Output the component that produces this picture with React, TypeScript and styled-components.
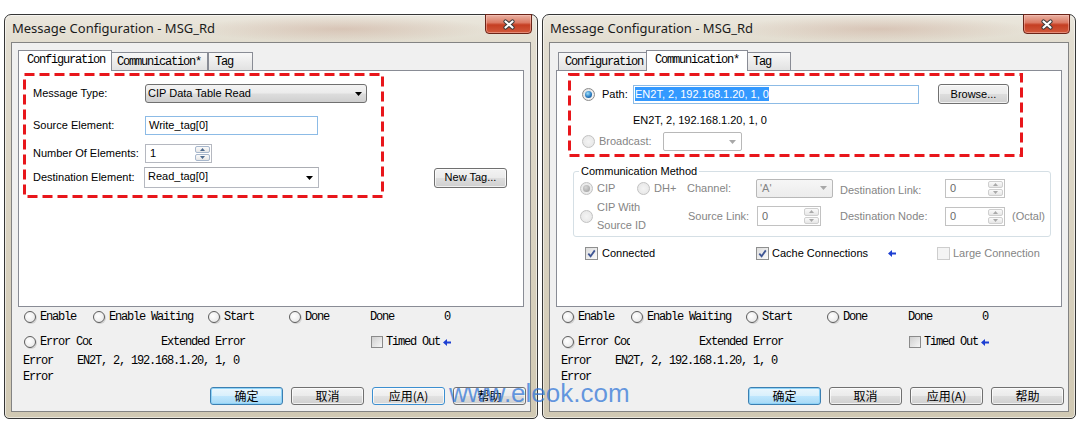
import React from "react";
import styled, { createGlobalStyle, css } from "styled-components";

const SANS = `"Liberation Sans", Arial, sans-serif`;
const MONO = `"Liberation Mono", "Courier New", monospace`;
const CJK = `"Noto Sans CJK SC", "Liberation Sans", sans-serif`;
const TITLE = `"Noto Sans", "Open Sans", sans-serif`;
const GRAY_TEXT = "#858585";

const GlobalStyle = createGlobalStyle`
  html, body { margin: 0; padding: 0; background: #fff; }
  * { box-sizing: border-box; }
`;

const Page = styled.div`
  position: relative;
  display: flex;
  align-items: flex-start;
  gap: 4px;
  padding: 14px 0 0 4px;
  width: 1081px;
  height: 429px;
  overflow: hidden;
  background: #fff;
`;

const Window = styled.div`
  width: 534px;
  display: flex;
  flex-direction: column;
  padding: 0 6px 6px;
  border: 1px solid #363636;
  border-radius: 7px 7px 5px 5px;
  background: linear-gradient(180deg, #ebe7dd 0px, #e2ddd0 27px, #d9d2c0 55%, #d1c9b3 100%);
  box-shadow: inset 0 0 0 1px rgba(255, 255, 255, 0.55);
`;

const TitleBar = styled.div`
  height: 27px;
  display: flex;
  align-items: center;
  justify-content: space-between;
  padding-left: 1px;
  background: radial-gradient(ellipse 150px 13px at 330px 14px, rgba(185, 135, 115, 0.32), rgba(185, 135, 115, 0) 100%);
`;

const Title = styled.span`
  font: 13px/1 ${TITLE};
  color: #1b1b1b;
  white-space: nowrap;
`;

const CloseButton = styled.div`
  align-self: flex-start;
  width: 47px;
  height: 20px;
  margin: -1px -1px 0 0;
  border: 1px solid #6b2418;
  border-radius: 0 0 4px 4px;
  background: linear-gradient(180deg, #e9b2a3 0%, #dc7a64 42%, #c53e22 55%, #d2593c 100%);
  box-shadow: inset 0 0 0 1px rgba(255, 205, 195, 0.45);
  display: flex;
  align-items: center;
  justify-content: center;
`;

const Client = styled.div`
  border: 1px solid #838383;
  background: #f0f0f0;
  padding: 7px 6px 6px;
  display: flex;
  flex-direction: column;
`;

const TabRow = styled.div`
  display: flex;
  align-items: flex-end;
  height: 20px;
  padding-left: 2px;
`;

const Tab = styled.div<{ $active?: boolean; $w: number }>`
  flex-shrink: 0;
  width: ${(p) => p.$w}px;
  height: 18px;
  padding-left: 6px;
  font: 12px/18px ${MONO};
  letter-spacing: -1.2px;
  color: #000;
  white-space: nowrap;
  border: 1px solid #898c95;
  border-bottom: none;
  background: linear-gradient(180deg, #f8f8f8, #e2e2e2);
  ${(p) =>
    p.$active &&
    css`
      position: relative;
      z-index: 1;
      width: ${p.$w + 4}px;
      height: 21px;
      margin: 0 -2px -1px;
      padding-left: 8px;
      line-height: 19px;
      background: #fff;
    `}
`;

const Panel = styled.div`
  position: relative;
  height: 237px;
  border: 1px solid #898c95;
  background: #fff;
`;

const AnnotationSvg = styled.svg<{ $l: number; $t: number }>`
  position: absolute;
  left: ${(p) => p.$l}px;
  top: ${(p) => p.$t}px;
  pointer-events: none;
`;

function Annotation({ l, t, w, h }: { l: number; t: number; w: number; h: number }) {
  return (
    <AnnotationSvg $l={l} $t={t} width={w} height={h} viewBox={`0 0 ${w} ${h}`}>
      <rect x="1.5" y="1.5" width={w - 3} height={h - 3} fill="none" stroke="#e8161b" strokeWidth="3" strokeDasharray="10 5" />
    </AnnotationSvg>
  );
}

/* ---------- generic Win7 controls ---------- */

const Label = styled.span<{ $w?: number; $disabled?: boolean; $pt?: number; $ml?: number }>`
  flex-shrink: 0;
  ${(p) => (p.$w ? `width: ${p.$w}px;` : "")}
  ${(p) => (p.$pt ? `padding-top: ${p.$pt}px;` : "")}
  margin-left: ${(p) => p.$ml ?? 0}px;
  font: 11px/13px ${SANS};
  color: ${(p) => (p.$disabled ? GRAY_TEXT : "#000")};
  white-space: nowrap;
`;

const PushButton = styled.div<{ $w: number; $h: number; $ml?: number; $hot?: boolean; $default?: boolean; $cjk?: boolean }>`
  flex-shrink: 0;
  width: ${(p) => p.$w}px;
  height: ${(p) => p.$h}px;
  margin-left: ${(p) => p.$ml ?? 0}px;
  border: 1px solid #707070;
  border-radius: 3px;
  background: linear-gradient(180deg, #f3f3f3 0%, #ebebeb 48%, #dddddd 52%, #cfcfcf 100%);
  box-shadow: inset 0 0 0 1px rgba(255, 255, 255, 0.7);
  display: flex;
  align-items: center;
  justify-content: center;
  font: ${(p) => (p.$cjk ? `12px/1 ${CJK}` : `11px/1 ${SANS}`)};
  color: #000;
  white-space: nowrap;
  ${(p) =>
    p.$hot &&
    css`
      border-color: #3c8fd0;
      background: linear-gradient(180deg, #f6f6f6 0%, #eeeeee 48%, #e2e2e2 52%, #d6d6d6 100%);
    `}
  ${(p) =>
    p.$default &&
    css`
      border-color: #3c7fb1;
      background: linear-gradient(180deg, #eaf6fd 0%, #d9f0fc 48%, #bee6fd 52%, #a7d9f5 100%);
      box-shadow: inset 0 0 0 1px #8fd3f7;
    `}
`;

const DropList = styled.div<{ $w: number }>`
  width: ${(p) => p.$w}px;
  height: 19px;
  border: 1px solid #707070;
  border-radius: 3px;
  background: linear-gradient(180deg, #f3f3f3 0%, #ebebeb 48%, #dddddd 52%, #cfcfcf 100%);
  display: flex;
  align-items: center;
  justify-content: space-between;
  padding: 0 4px 0 2px;
  font: 11px/1 ${SANS};
  color: #000;
`;

const TextBox = styled.div<{ $w: number; $h?: number; $hot?: boolean; $pl?: number; $ml?: number }>`
  flex-shrink: 0;
  width: ${(p) => p.$w}px;
  height: ${(p) => p.$h ?? 19}px;
  margin-left: ${(p) => p.$ml ?? 0}px;
  border: 1px solid ${(p) => (p.$hot ? "#8cbbe6" : "#b5b8c0")};
  ${(p) => (p.$hot ? "" : "border-top-color: #abadb3; border-bottom-color: #dfe3ea;")}
  background: #fff;
  display: flex;
  align-items: center;
  padding-left: ${(p) => p.$pl ?? 3}px;
  font: 11px/1 ${SANS};
  color: #000;
  white-space: nowrap;
`;

const Selection = styled.span`
  background: #3399ff;
  color: #fff;
  line-height: 14px;
`;

const EditCombo = styled.div<{ $w: number; $ml?: number }>`
  flex-shrink: 0;
  width: ${(p) => p.$w}px;
  height: 21px;
  margin-left: ${(p) => p.$ml ?? 0}px;
  border: 1px solid #b5b8c0;
  border-top-color: #abadb3;
  background: #fff;
  display: flex;
  align-items: flex-start;
  justify-content: space-between;
  padding: 2px 5px 0 3px;
  font: 11px/13px ${SANS};
  color: #000;
  & > svg {
    margin-top: 6px;
  }
`;

const DisabledCombo = styled.div<{ $w: number; $fill?: boolean }>`
  flex-shrink: 0;
  width: ${(p) => p.$w}px;
  height: 19px;
  border: 1px solid #b8b8b8;
  border-radius: 2px;
  background: ${(p) => (p.$fill ? "linear-gradient(180deg, #f6f6f6, #ececec)" : "#fff")};
  display: flex;
  align-items: center;
  justify-content: space-between;
  padding: 0 5px 0 3px;
  font: 11px/1 ${SANS};
  color: ${GRAY_TEXT};
`;

const SpinBox = styled.div<{ $w: number; $h?: number; $disabled?: boolean; $ml?: number }>`
  flex-shrink: 0;
  width: ${(p) => p.$w}px;
  height: ${(p) => p.$h ?? 19}px;
  margin-left: ${(p) => p.$ml ?? 0}px;
  border: 1px solid ${(p) => (p.$disabled ? "#c2c2c2" : "#b5b8c0")};
  background: #fff;
  display: flex;
  align-items: center;
  padding-left: 4px;
  font: 11px/1 ${SANS};
  color: ${(p) => (p.$disabled ? "#6a6a6a" : "#000")};
`;

const SpinButtons = styled.div`
  margin-left: auto;
  width: 17px;
  height: 100%;
  display: flex;
  flex-direction: column;
  gap: 1px;
  padding: 1px;
`;

const SpinBtn = styled.span<{ $disabled?: boolean }>`
  flex: 1;
  border: 1px solid ${(p) => (p.$disabled ? "#cfcfcf" : "#a7b7cc")};
  border-radius: 2px;
  background: linear-gradient(180deg, #fafafa, #e6e6e6);
  display: flex;
  align-items: center;
  justify-content: center;
`;

const Radio = styled.span<{ $checked?: boolean; $disabled?: boolean }>`
  flex-shrink: 0;
  width: 13px;
  height: 13px;
  border-radius: 50%;
  border: 1px solid ${(p) => (p.$disabled ? "#c2c2c2" : "#8b8b8b")};
  background: ${(p) =>
    p.$disabled ? "radial-gradient(circle, #f4f4f4, #e4e4e4)" : "radial-gradient(circle at 60% 60%, #fdfdfd, #dcdcdc)"};
  display: inline-flex;
  align-items: center;
  justify-content: center;
  &::after {
    content: "";
    display: ${(p) => (p.$checked ? "block" : "none")};
    width: 7px;
    height: 7px;
    border-radius: 50%;
    background: ${(p) =>
      p.$disabled
        ? "radial-gradient(circle at 40% 35%, #d6d6d6, #9a9a9a)"
        : "radial-gradient(circle at 40% 35%, #9fe0fa 0%, #2a7cc2 55%, #0d3f73 100%)"};
  }
`;

const CheckBox = styled.span<{ $disabled?: boolean }>`
  flex-shrink: 0;
  width: 13px;
  height: 13px;
  border: 1px solid ${(p) => (p.$disabled ? "#cdcdcd" : "#8e8f8f")};
  background: ${(p) => (p.$disabled ? "#f4f4f4" : "linear-gradient(135deg, #dcdcdc, #fbfbfb)")};
  display: inline-flex;
  align-items: center;
  justify-content: center;
`;

/* ---------- icons ---------- */

const CloseIcon = () => (
  <svg width="14" height="11" viewBox="0 0 14 11">
    <path d="M3.5 2.5L10.5 8.5M10.5 2.5L3.5 8.5" stroke="#3a3a3a" strokeWidth="4.2" strokeLinecap="round" />
    <path d="M3.5 2.5L10.5 8.5M10.5 2.5L3.5 8.5" stroke="#ffffff" strokeWidth="2.2" strokeLinecap="round" />
  </svg>
);

const DropArrow = ({ color = "#000" }: { color?: string }) => (
  <svg width="7" height="4" viewBox="0 0 7 4">
    <path d="M0 0H7L3.5 4Z" fill={color} />
  </svg>
);

const SpinArrow = ({ up, color }: { up?: boolean; color: string }) => (
  <svg width="5" height="3" viewBox="0 0 5 3">
    <path d={up ? "M0 3H5L2.5 0Z" : "M0 0H5L2.5 3Z"} fill={color} />
  </svg>
);

const BlueArrow = () => (
  <svg width="8" height="7" viewBox="0 0 8 7">
    <path d="M0 3.5L4 0V2.4H8V4.6H4V7Z" fill="#1d3fd2" />
  </svg>
);

const CheckMark = () => (
  <svg width="9" height="9" viewBox="0 0 9 9">
    <path d="M1.3 4.6L3.6 7.2L7.8 1.4" fill="none" stroke="#3f5694" strokeWidth="1.8" />
  </svg>
);

function Spinner({ w, h, value, disabled, ml }: { w: number; h?: number; value: string; disabled?: boolean; ml?: number }) {
  const c = disabled ? "#a9a9a9" : "#4d6a8e";
  return (
    <SpinBox $w={w} $h={h} $disabled={disabled} $ml={ml}>
      {value}
      <SpinButtons>
        <SpinBtn $disabled={disabled}>
          <SpinArrow up color={c} />
        </SpinBtn>
        <SpinBtn $disabled={disabled}>
          <SpinArrow color={c} />
        </SpinBtn>
      </SpinButtons>
    </SpinBox>
  );
}

/* ---------- configuration tab ---------- */

const FormArea = styled.div`
  display: flex;
  flex-direction: column;
  padding-left: 14px;
`;

const FormRow = styled.div<{ $mt: number; $h: number }>`
  display: flex;
  align-items: center;
  margin-top: ${(p) => p.$mt}px;
  height: ${(p) => p.$h}px;
`;

function ConfigContent() {
  return (
    <>
      <FormArea>
        <FormRow $mt={13} $h={19}>
          <Label $w={112}>Message Type:</Label>
          <DropList $w={222}>
            <span>CIP Data Table Read</span>
            <DropArrow />
          </DropList>
        </FormRow>
        <FormRow $mt={13} $h={19}>
          <Label $w={112}>Source Element:</Label>
          <TextBox $w={173} $hot>
            Write_tag[0]
          </TextBox>
        </FormRow>
        <FormRow $mt={9} $h={19}>
          <Label $w={112}>Number Of Elements:</Label>
          <Spinner w={67} value="1" />
        </FormRow>
        <FormRow $mt={4} $h={21}>
          <Label $w={112}>Destination Element:</Label>
          <EditCombo $w={175} $ml={-1}>
            <span>Read_tag[0]</span>
            <DropArrow />
          </EditCombo>
          <PushButton $w={73} $h={20} $ml={115}>
            New Tag...
          </PushButton>
        </FormRow>
      </FormArea>
      <Annotation l={4} t={2} w={361} h={125} />
    </>
  );
}

/* ---------- communication tab ---------- */

const PathSection = styled.div`
  display: flex;
  flex-direction: column;
  padding-left: 25px;
`;

const LineRow = styled.div<{ $mt: number; $h: number; $pl?: number }>`
  display: flex;
  align-items: center;
  margin-top: ${(p) => p.$mt}px;
  height: ${(p) => p.$h}px;
  padding-left: ${(p) => p.$pl ?? 0}px;
`;

const Group = styled.fieldset`
  margin: 14px 0 0 16px;
  width: 478px;
  min-width: 0;
  padding: 0 0 10px 6px;
  border: 1px solid #d5dfe5;
  border-radius: 3px;
`;

const GroupLegend = styled.legend`
  margin-left: -1px;
  padding: 0 2px;
  font: 11px/13px ${SANS};
  color: #000;
`;

const GroupGrid = styled.div`
  display: grid;
  grid-template-columns: 107px 69px 84px 105px 67px auto;
  grid-template-rows: 20px 20px;
  row-gap: 8px;
  align-items: center;
`;

const Option = styled.div<{ $w?: number; $gap?: number }>`
  display: flex;
  align-items: center;
  flex-shrink: 0;
  ${(p) => (p.$w ? `width: ${p.$w}px;` : "")}
  gap: ${(p) => p.$gap ?? 4}px;
`;

const TwoLine = styled.span`
  font: 11px/18px ${SANS};
  color: ${GRAY_TEXT};
  white-space: nowrap;
`;

const ConnRow = styled.div`
  display: flex;
  align-items: center;
  margin-top: 10px;
  height: 13px;
  padding-left: 28px;
`;

function CommContent() {
  return (
    <>
      <PathSection>
        <LineRow $mt={13} $h={20}>
          <Radio $checked />
          <Label $w={31} $ml={7}>
            Path:
          </Label>
          <TextBox $w={286} $hot $pl={1}>
            <Selection>EN2T, 2, 192.168.1.20, 1, 0</Selection>
          </TextBox>
          <PushButton $w={71} $h={20} $ml={19}>
            Browse...
          </PushButton>
        </LineRow>
        <LineRow $mt={8} $h={16} $pl={51}>
          <Label>EN2T, 2, 192.168.1.20, 1, 0</Label>
        </LineRow>
        <LineRow $mt={4} $h={19}>
          <Radio $disabled />
          <Label $w={64} $disabled $ml={4}>
            Broadcast:
          </Label>
          <DisabledCombo $w={79}>
            <span />
            <DropArrow color="#a8a8a8" />
          </DisabledCombo>
        </LineRow>
      </PathSection>
      <Group>
        <GroupLegend>Communication Method</GroupLegend>
        <GroupGrid>
          <Option>
            <Option $w={53}>
              <Radio $checked $disabled />
              <Label $disabled>CIP</Label>
            </Option>
            <Option>
              <Radio $disabled />
              <Label $disabled>DH+</Label>
            </Option>
          </Option>
          <Label $disabled>Channel:</Label>
          <DisabledCombo $w={77} $fill>
            <span>'A'</span>
            <DropArrow color="#a8a8a8" />
          </DisabledCombo>
          <Label $disabled $pt={4}>
            Destination Link:
          </Label>
          <Spinner w={60} value="0" disabled />
          <span />

          <Option>
            <Radio $disabled />
            <TwoLine>
              CIP With
              <br />
              Source ID
            </TwoLine>
          </Option>
          <Label $disabled $ml={1}>
            Source Link:
          </Label>
          <Spinner w={64} h={20} value="0" disabled ml={1} />
          <Label $disabled>Destination Node:</Label>
          <Spinner w={60} value="0" disabled />
          <Label $disabled>(Octal)</Label>
        </GroupGrid>
      </Group>
      <ConnRow>
        <Option $w={171}>
          <CheckBox>
            <CheckMark />
          </CheckBox>
          <Label>Connected</Label>
        </Option>
        <Option $w={132} $gap={3}>
          <CheckBox>
            <CheckMark />
          </CheckBox>
          <Label>Cache Connections</Label>
        </Option>
        <Option $w={49}>
          <BlueArrow />
        </Option>
        <Option $gap={3}>
          <CheckBox $disabled />
          <Label $disabled>Large Connection</Label>
        </Option>
      </ConnRow>
      <Annotation l={11} t={2} w={455} h={84} />
    </>
  );
}

/* ---------- status section ---------- */

const StatusRow = styled.div<{ $mt: number; $pl: number }>`
  display: flex;
  align-items: center;
  height: 16px;
  margin-top: ${(p) => p.$mt}px;
  padding-left: ${(p) => p.$pl}px;
  font: 12px/16px ${MONO};
  letter-spacing: -1.2px;
  color: #000;
  white-space: nowrap;
`;

const Cell = styled.div<{ $w?: number; $gap?: number }>`
  display: flex;
  align-items: center;
  flex-shrink: 0;
  ${(p) => (p.$w ? `width: ${p.$w}px;` : "")}
  gap: ${(p) => p.$gap ?? 4}px;
`;

const OldRadio = styled.span`
  flex-shrink: 0;
  width: 12px;
  height: 12px;
  border-radius: 50%;
  border: 1px solid #5c5c5c;
  background: radial-gradient(circle at 40% 40%, #ffffff, #e2e2e2);
  box-shadow: 1px 1px 0 rgba(0, 0, 0, 0.12);
`;

const OldCheck = styled.span`
  flex-shrink: 0;
  width: 12px;
  height: 12px;
  border: 1px solid #8a8a8a;
  background: linear-gradient(135deg, #cfcfcf, #f6f6f6);
`;

const Clip = styled.span<{ $w: number }>`
  display: inline-block;
  width: ${(p) => p.$w}px;
  overflow: hidden;
`;

const ButtonRow = styled.div`
  display: flex;
  justify-content: flex-end;
  gap: 8px;
  margin: 2px -2px 0 0;
`;

function StatusSection({ applyHot }: { applyHot?: boolean }) {
  return (
    <>
      <StatusRow $mt={2} $pl={6}>
        <Cell $w={69}>
          <OldRadio />
          <span>Enable</span>
        </Cell>
        <Cell $w={115}>
          <OldRadio />
          <span>Enable Waiting</span>
        </Cell>
        <Cell $w={81}>
          <OldRadio />
          <span>Start</span>
        </Cell>
        <Cell $w={81}>
          <OldRadio />
          <span>Done</span>
        </Cell>
        <Cell $w={74}>Done</Cell>
        <Cell>0</Cell>
      </StatusRow>
      <StatusRow $mt={9} $pl={6}>
        <Cell $w={137}>
          <OldRadio />
          <Clip $w={52}>Error Code</Clip>
        </Cell>
        <Cell $w={210}>Extended Error</Cell>
        <Cell $gap={3}>
          <OldCheck />
          <span>Timed Out</span>
          <BlueArrow />
        </Cell>
      </StatusRow>
      <StatusRow $mt={3} $pl={5}>
        <Cell $w={54}>Error</Cell>
        <Cell>EN2T, 2, 192.168.1.20, 1, 0</Cell>
      </StatusRow>
      <StatusRow $mt={0} $pl={5}>
        <Cell>Error</Cell>
      </StatusRow>
      <ButtonRow>
        <PushButton $w={73} $h={18} $cjk $default>
          确定
        </PushButton>
        <PushButton $w={73} $h={18} $cjk>
          取消
        </PushButton>
        <PushButton $w={73} $h={18} $cjk $hot={applyHot}>
          应用(A)
        </PushButton>
        <PushButton $w={73} $h={18} $cjk>
          帮助
        </PushButton>
      </ButtonRow>
    </>
  );
}

/* ---------- dialog ---------- */

function Dialog({ tab }: { tab: "config" | "comm" }) {
  return (
    <Window>
      <TitleBar>
        <Title>Message Configuration - MSG_Rd</Title>
        <CloseButton>
          <CloseIcon />
        </CloseButton>
      </TitleBar>
      <Client>
        <TabRow>
          <Tab $w={90} $active={tab === "config"}>
            Configuration
          </Tab>
          <Tab $w={98} $active={tab === "comm"}>
            Communication*
          </Tab>
          <Tab $w={45}>Tag</Tab>
        </TabRow>
        <Panel>{tab === "config" ? <ConfigContent /> : <CommContent />}</Panel>
        <StatusSection applyHot={tab === "config"} />
      </Client>
    </Window>
  );
}

const Watermark = styled.div`
  position: absolute;
  left: 449px;
  top: 380px;
  font: 26px/26px ${SANS};
  color: rgba(45, 115, 215, 0.72);
  pointer-events: none;
  white-space: nowrap;
`;

export default function App() {
  return (
    <>
      <GlobalStyle />
      <Page>
        <Dialog tab="config" />
        <Dialog tab="comm" />
        <Watermark>www.eleok.com</Watermark>
      </Page>
    </>
  );
}
